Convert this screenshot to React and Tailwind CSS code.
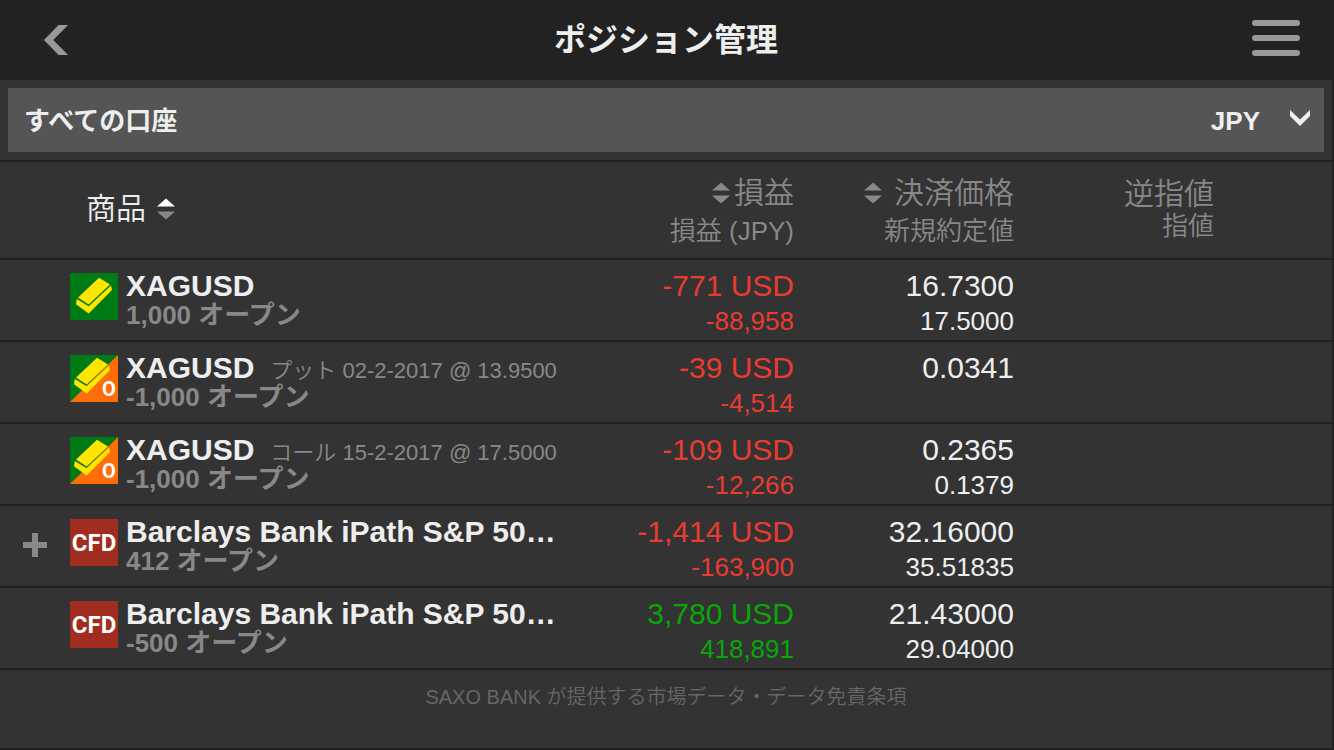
import React from "react";

const positions = [
  { icon: "gold", name: "XAGUSD", open: "1,000 オープン", pl: "-771 USD", plJpy: "-88,958", price: "16.7300", openPrice: "17.5000" },
  { icon: "option", name: "XAGUSD", detail: "プット 02-2-2017 @ 13.9500", open: "-1,000 オープン", pl: "-39 USD", plJpy: "-4,514", price: "0.0341", openPrice: "" },
  { icon: "option", name: "XAGUSD", detail: "コール 15-2-2017 @ 17.5000", open: "-1,000 オープン", pl: "-109 USD", plJpy: "-12,266", price: "0.2365", openPrice: "0.1379" },
  { icon: "cfd", expandable: true, name: "Barclays Bank iPath S&P 50…", open: "412 オープン", pl: "-1,414 USD", plJpy: "-163,900", price: "32.16000", openPrice: "35.51835" },
  { icon: "cfd", name: "Barclays Bank iPath S&P 50…", open: "-500 オープン", pl: "3,780 USD", plJpy: "418,891", price: "21.43000", openPrice: "29.04000", gain: true },
];

function SortArrows({ active }) {
  return (
    <svg width="18" height="22" viewBox="0 0 18 22" className="shrink-0" aria-hidden="true">
      <path d="M0 8.5 9 0.5 18 8.5Z" fill={active ? "#ffffff" : "#888888"} />
      <path d="M0 13.5H18L9 21.5Z" fill="#888888" />
    </svg>
  );
}

function GoldBar() {
  return (
    <g fill="#ffe600">
      <path d="M29 4.7 40 11.4 18.7 31.4 8 24.4Z" />
      <path d="M6.8 26 18.7 33.2 41 12.4 42 17 18.7 40.6 6 31.2Z" />
    </g>
  );
}

function InstrumentIcon({ kind }) {
  if (kind === "cfd") {
    return (
      <svg width="48" height="47" viewBox="0 0 48 47" className="shrink-0" aria-hidden="true">
        <rect width="48" height="47" fill="#a02d20" />
        <text x="24" y="32" textAnchor="middle" fill="#ffffff" className="font-[Roboto,sans-serif] text-[24px] font-bold">CFD</text>
      </svg>
    );
  }
  return (
    <svg width="48" height="47" viewBox="0 0 48 47" className="shrink-0" aria-hidden="true">
      <rect width="48" height="47" fill="#007a14" />
      {kind === "option" ? (
        <>
          <path d="M48 0V47H0Z" fill="#ff6c08" />
          <g transform="translate(-2 -2)"><GoldBar /></g>
          <text x="39" y="41" textAnchor="middle" fill="#ffffff" className="font-[Roboto,sans-serif] text-[20px] font-bold">O</text>
        </>
      ) : (
        <GoldBar />
      )}
    </svg>
  );
}

function PositionRow({ position: p }) {
  const plColor = p.gain ? "text-[#09a509]" : "text-[#e93b31]";
  return (
    <tr className="h-[82px] border-b-2 border-[#222222]">
      <td className="pb-[2px] align-middle">
        {p.expandable && (
          <button type="button" aria-label="展開" className="ml-[23px] block">
            <svg width="24" height="24" viewBox="0 0 24 24" aria-hidden="true">
              <path d="M9 0H15V9H24V15H15V24H9V15H0V9H9Z" fill="#888888" />
            </svg>
          </button>
        )}
      </td>
      <td className="pt-2 align-top">
        <div className="flex gap-2">
          <div className="pt-[5px]"><InstrumentIcon kind={p.icon} /></div>
          <div className="min-w-0 flex-1">
            <div className="flex h-9 items-baseline gap-4 leading-9 whitespace-nowrap">
              <span className="text-[30px] font-bold text-[#eeeeee]">{p.name}</span>
              {p.detail && <span className="text-[22px] font-[350] text-[#888888]">{p.detail}</span>}
            </div>
            <div className="text-[26px] leading-[22px] font-bold text-[#888888]">{p.open}</div>
          </div>
        </div>
      </td>
      <td className={`pt-2 text-right align-top ${plColor}`}>
        <div className="text-[30px] leading-9">{p.pl}</div>
        <div className="text-[26px] leading-[34px]">{p.plJpy}</div>
      </td>
      <td className="pt-2 text-right align-top text-[#eeeeee]">
        <div className="text-[30px] leading-9">{p.price}</div>
        <div className="text-[26px] leading-[34px]">{p.openPrice}</div>
      </td>
      <td></td>
    </tr>
  );
}

export default function App() {
  return (
    <div className="flex min-h-screen flex-col bg-[#333333] font-['Liberation_Sans','Noto_Sans_CJK_JP',sans-serif] text-[#eeeeee]" lang="ja">
      <header className="grid h-20 grid-cols-[1fr_auto_1fr] items-center bg-[#222222] pr-[34px] pl-8">
        <button type="button" aria-label="戻る" className="flex w-12 justify-center">
          <svg width="24" height="30" viewBox="0 0 24 30" aria-hidden="true">
            <path d="M14.5 0H24L9.3 15 24 30H14.5L0 15Z" fill="#999999" />
          </svg>
        </button>
        <h1 className="text-[32px] leading-10 font-bold">ポジション管理</h1>
        <button type="button" aria-label="メニュー" className="flex flex-col gap-[9px] justify-self-end pb-1">
          <span className="h-[6px] w-12 rounded-full bg-[#999999]" />
          <span className="h-[6px] w-12 rounded-full bg-[#999999]" />
          <span className="h-[6px] w-12 rounded-full bg-[#999999]" />
        </button>
      </header>

      <main className="flex flex-1 flex-col border-r-2 border-b-2 border-[#222222]">
        <div className="border-b-2 border-[#222222] p-2">
          <div className="grid h-16 items-center bg-[#555555] text-[26px] font-bold">
            <select aria-label="口座" className="col-start-1 row-start-1 h-full w-full appearance-none bg-transparent px-4 pt-[2px]">
              <option>すべての口座</option>
            </select>
            <div className="pointer-events-none col-start-1 row-start-1 flex items-center justify-end gap-[30px] pr-[14px]">
              <span className="pt-[2px]">JPY</span>
              <svg width="20" height="16" viewBox="0 0 20 16" className="mb-1" aria-hidden="true">
                <path d="M0 0 10 9.6 20 0V6L10 16 0 6Z" fill="#eeeeee" />
              </svg>
            </div>
          </div>
        </div>

        <table className="w-full table-fixed border-collapse">
          <colgroup>
            <col className="w-[70px]" />
            <col />
            <col className="w-[230px]" />
            <col className="w-[220px]" />
            <col className="w-[318px]" />
          </colgroup>
          <thead>
            <tr className="h-[97px] border-b-2 border-[#222222] text-[#888888]">
              <td></td>
              <th scope="col" className="pb-[2px] pl-4 text-left align-middle font-[350]">
                <button type="button" className="flex items-center gap-[11px] text-[30px] leading-9 text-[#eeeeee]">
                  商品 <SortArrows active />
                </button>
              </th>
              <th scope="col" className="pt-[2px] text-right font-[350]">
                <button type="button" className="ml-auto flex items-center gap-1 text-[30px] leading-10">
                  <SortArrows /> 損益
                </button>
                <div className="text-[26px] leading-9">損益 (JPY)</div>
              </th>
              <th scope="col" className="pt-[2px] text-right font-[350]">
                <button type="button" className="ml-auto flex items-center gap-3 text-[30px] leading-10">
                  <SortArrows /> 決済価格
                </button>
                <div className="text-[26px] leading-9">新規約定値</div>
              </th>
              <th scope="col" className="pr-[118px] pb-1 text-right font-[350]">
                <div className="text-[30px] leading-9">逆指値</div>
                <div className="text-[26px] leading-7">指値</div>
              </th>
            </tr>
          </thead>
          <tbody>
            {positions.map((p, i) => (
              <PositionRow key={i} position={p} />
            ))}
          </tbody>
        </table>

        <footer className="pt-3 text-center text-[20px] leading-[30px] font-[350] text-[#666666]">
          SAXO BANK が提供する市場データ・データ免責条項
        </footer>
      </main>
    </div>
  );
}
